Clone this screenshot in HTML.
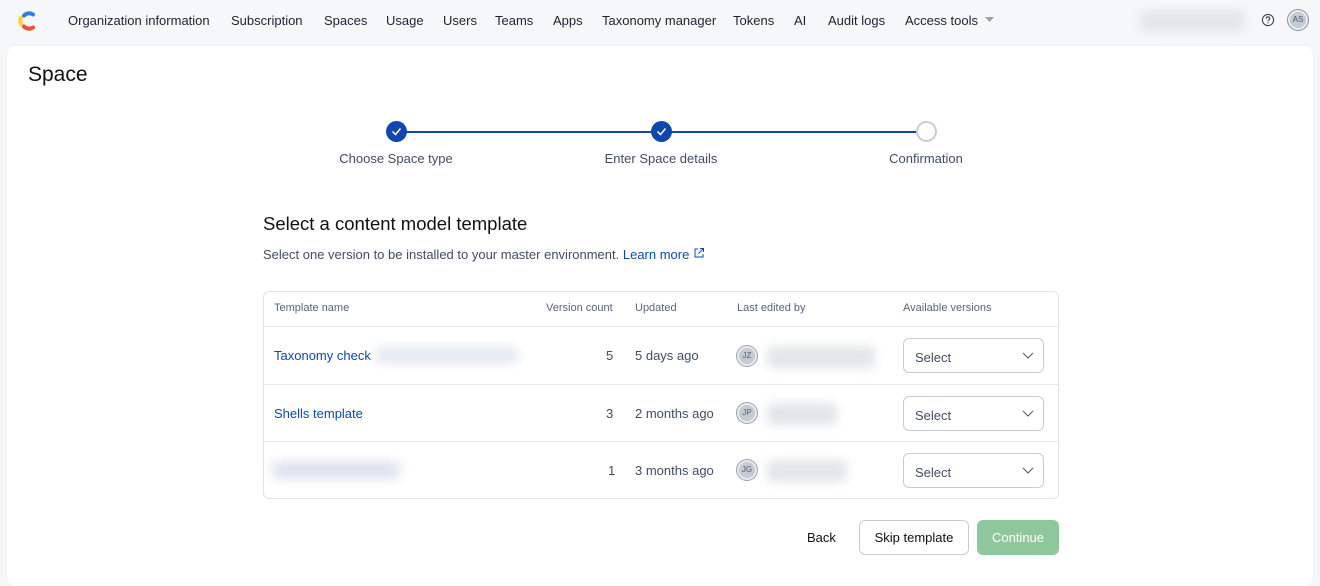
<!DOCTYPE html>
<html><head><style>
*{box-sizing:border-box;margin:0;padding:0}
body{width:1320px;height:574px;overflow:hidden;background:#f6f7f9;font-family:"Liberation Sans",sans-serif;color:#111b2b;position:relative}
.nav{position:absolute;top:0;left:0;width:1320px;height:42px}
.nav a{position:absolute;top:13px;font-size:13px;color:#1b2434;text-decoration:none;white-space:nowrap}
.card{position:absolute;left:7px;top:46px;width:1306px;height:540px;background:#fff;border-radius:8px;box-shadow:0 0 2px rgba(0,0,0,.06)}
.abs{position:absolute}
.circ{position:absolute;width:21px;height:21px;border-radius:50%;top:121px}
.lbl{position:absolute;top:151px;font-size:13px;color:#414d63;transform:translateX(-50%);white-space:nowrap}
.blur{position:absolute;background:#d8dbe2;filter:blur(5px);border-radius:6px}
.th{position:absolute;top:302px;font-size:11px;color:#5a6578}
.td{position:absolute;font-size:13px;color:#414d63}
.link{color:#0f48b0}
.av{position:absolute;left:737px;width:20px;height:20px;border-radius:50%;background:#c5cad3;border:2px solid #e8eaee;box-shadow:0 0 0 1px #9aa1ad;font-size:8px;color:#555f70;text-align:center;line-height:16px}
.sel{position:absolute;left:903px;width:141px;height:35px;border:1px solid #c8ccd4;border-radius:6px;font-size:13px;color:#414d63;padding:11px 0 0 11px}
.sel svg{position:absolute;right:9px;top:13px}
.row{position:absolute;left:264px;width:794px;height:1px;background:#e6e8ec}
</style></head><body>
<div class="nav">
<svg class="abs" style="left:16px;top:9px" width="22" height="24" viewBox="0 0 22 24"><path d="M8 6.5a7 7 0 0 1 9 -1" stroke="#2f7ee8" stroke-width="4" fill="none" stroke-linecap="round"/><path d="M5 9a7 7 0 0 0 0 6" stroke="#ffd23a" stroke-width="4" fill="none" stroke-linecap="round"/><path d="M8 17.5a7 7 0 0 0 9 1" stroke="#e8512f" stroke-width="4" fill="none" stroke-linecap="round"/></svg>
<a style="left:68px">Organization information</a><a style="left:231px">Subscription</a><a style="left:324px">Spaces</a><a style="left:386px">Usage</a><a style="left:443px">Users</a><a style="left:495px">Teams</a><a style="left:553px">Apps</a><a style="left:602px">Taxonomy manager</a><a style="left:733px">Tokens</a><a style="left:794px">AI</a><a style="left:828px">Audit logs</a><a style="left:905px">Access tools</a>
<svg class="abs" style="left:985px;top:17px" width="10" height="6"><path d="M0 0h9l-4.5 5z" fill="#9aa1ad"/></svg>
<div class="blur" style="left:1140px;top:10px;width:105px;height:22px;background:#e4e6ea"></div>
<svg class="abs" style="left:1261px;top:13px" width="14" height="14" viewBox="0 0 14 14"><circle cx="7" cy="7" r="5.6" stroke="#444" stroke-width="1.1" fill="none"/><path d="M5.3 5.6a1.7 1.7 0 1 1 2.3 1.5c-.5.2-.6.5-.6 1" stroke="#444" stroke-width="1.1" fill="none"/><circle cx="7" cy="9.9" r=".6" fill="#444"/></svg>
<div class="abs" style="left:1288px;top:10px;width:20px;height:20px;border-radius:50%;background:#c5cad3;box-shadow:0 0 0 1px #8a919d;border:2px solid #e8eaee;font-size:8px;line-height:16px;text-align:center;color:#4a5363">AS</div>
</div>
<div class="card"></div>
<div class="abs" style="left:28px;top:63px;font-size:21px;color:#111">Space</div>
<div class="abs" style="left:396px;top:131px;width:530px;height:2px;background:#1047ae"></div>
<div class="circ" style="left:386px;background:#1047ae"><svg width="21" height="21"><path d="M6.5 10.5l3 3 5-6" stroke="#fff" stroke-width="1.5" fill="none"/></svg></div>
<div class="circ" style="left:651px;background:#1047ae"><svg width="21" height="21"><path d="M6.5 10.5l3 3 5-6" stroke="#fff" stroke-width="1.5" fill="none"/></svg></div>
<div class="circ" style="left:916px;background:#fff;border:2px solid #c8ccd4"></div>
<div class="lbl" style="left:396px">Choose Space type</div>
<div class="lbl" style="left:661px">Enter Space details</div>
<div class="lbl" style="left:926px">Confirmation</div>
<div class="abs" style="left:263px;top:213px;font-size:18.5px;color:#111">Select a content model template</div>
<div class="abs" style="left:263px;top:247px;font-size:13px;color:#414d63">Select one version to be installed to your master environment. <span class="link">Learn more</span> <svg width="12" height="12" viewBox="0 0 12 12"><path d="M5 2H2v8h8V7M7 1.5h3.5V5M10.5 1.5L5.5 6.5" stroke="#0f48b0" fill="none" stroke-width="1"/></svg></div>
<div class="abs" style="left:263px;top:291px;width:796px;height:208px;border:1px solid #e2e4e9;border-radius:6px"></div>
<div class="row" style="top:326px"></div><div class="row" style="top:384px"></div><div class="row" style="top:441px"></div>
<div class="th" style="left:274px">Template name</div><div class="th" style="left:546px">Version count</div><div class="th" style="left:635px">Updated</div><div class="th" style="left:737px">Last edited by</div><div class="th" style="left:903px">Available versions</div>
<div class="td link" style="left:274px;top:348px">Taxonomy check</div>
<div class="blur" style="left:376px;top:346px;width:142px;height:18px;background:#e6eaf3"></div>
<div class="td link" style="left:274px;top:406px">Shells template</div>
<div class="blur" style="left:272px;top:461px;width:128px;height:18px;background:#dfe4f0"></div>
<div class="td" style="left:606px;top:348px">5</div><div class="td" style="left:606px;top:406px">3</div><div class="td" style="left:608px;top:463px">1</div>
<div class="td" style="left:635px;top:348px">5 days ago</div><div class="td" style="left:635px;top:406px">2 months ago</div><div class="td" style="left:635px;top:463px">3 months ago</div>
<div class="av" style="top:346px">JZ</div><div class="av" style="top:403px">JP</div><div class="av" style="top:460px">JG</div>
<div class="blur" style="left:767px;top:346px;width:108px;height:22px;background:#e3e5e9"></div>
<div class="blur" style="left:767px;top:403px;width:70px;height:22px;background:#e3e5e9"></div>
<div class="blur" style="left:767px;top:460px;width:80px;height:22px;background:#e3e5e9"></div>
<div class="sel" style="top:338px">Select<svg width="12" height="8"><path d="M1 1l5 5 5-5" stroke="#555" fill="none"/></svg></div>
<div class="sel" style="top:396px">Select<svg width="12" height="8"><path d="M1 1l5 5 5-5" stroke="#555" fill="none"/></svg></div>
<div class="sel" style="top:453px">Select<svg width="12" height="8"><path d="M1 1l5 5 5-5" stroke="#555" fill="none"/></svg></div>
<div class="abs" style="left:807px;top:530px;font-size:13px;color:#111">Back</div>
<div class="abs" style="left:859px;top:520px;width:110px;height:35px;border:1px solid #c8ccd4;border-radius:6px;font-size:13px;color:#111;text-align:center;line-height:33px">Skip template</div>
<div class="abs" style="left:977px;top:520px;width:82px;height:35px;background:#8fc79d;border-radius:6px;font-size:13px;color:#fff;text-align:center;line-height:35px">Continue</div>
</body></html>
